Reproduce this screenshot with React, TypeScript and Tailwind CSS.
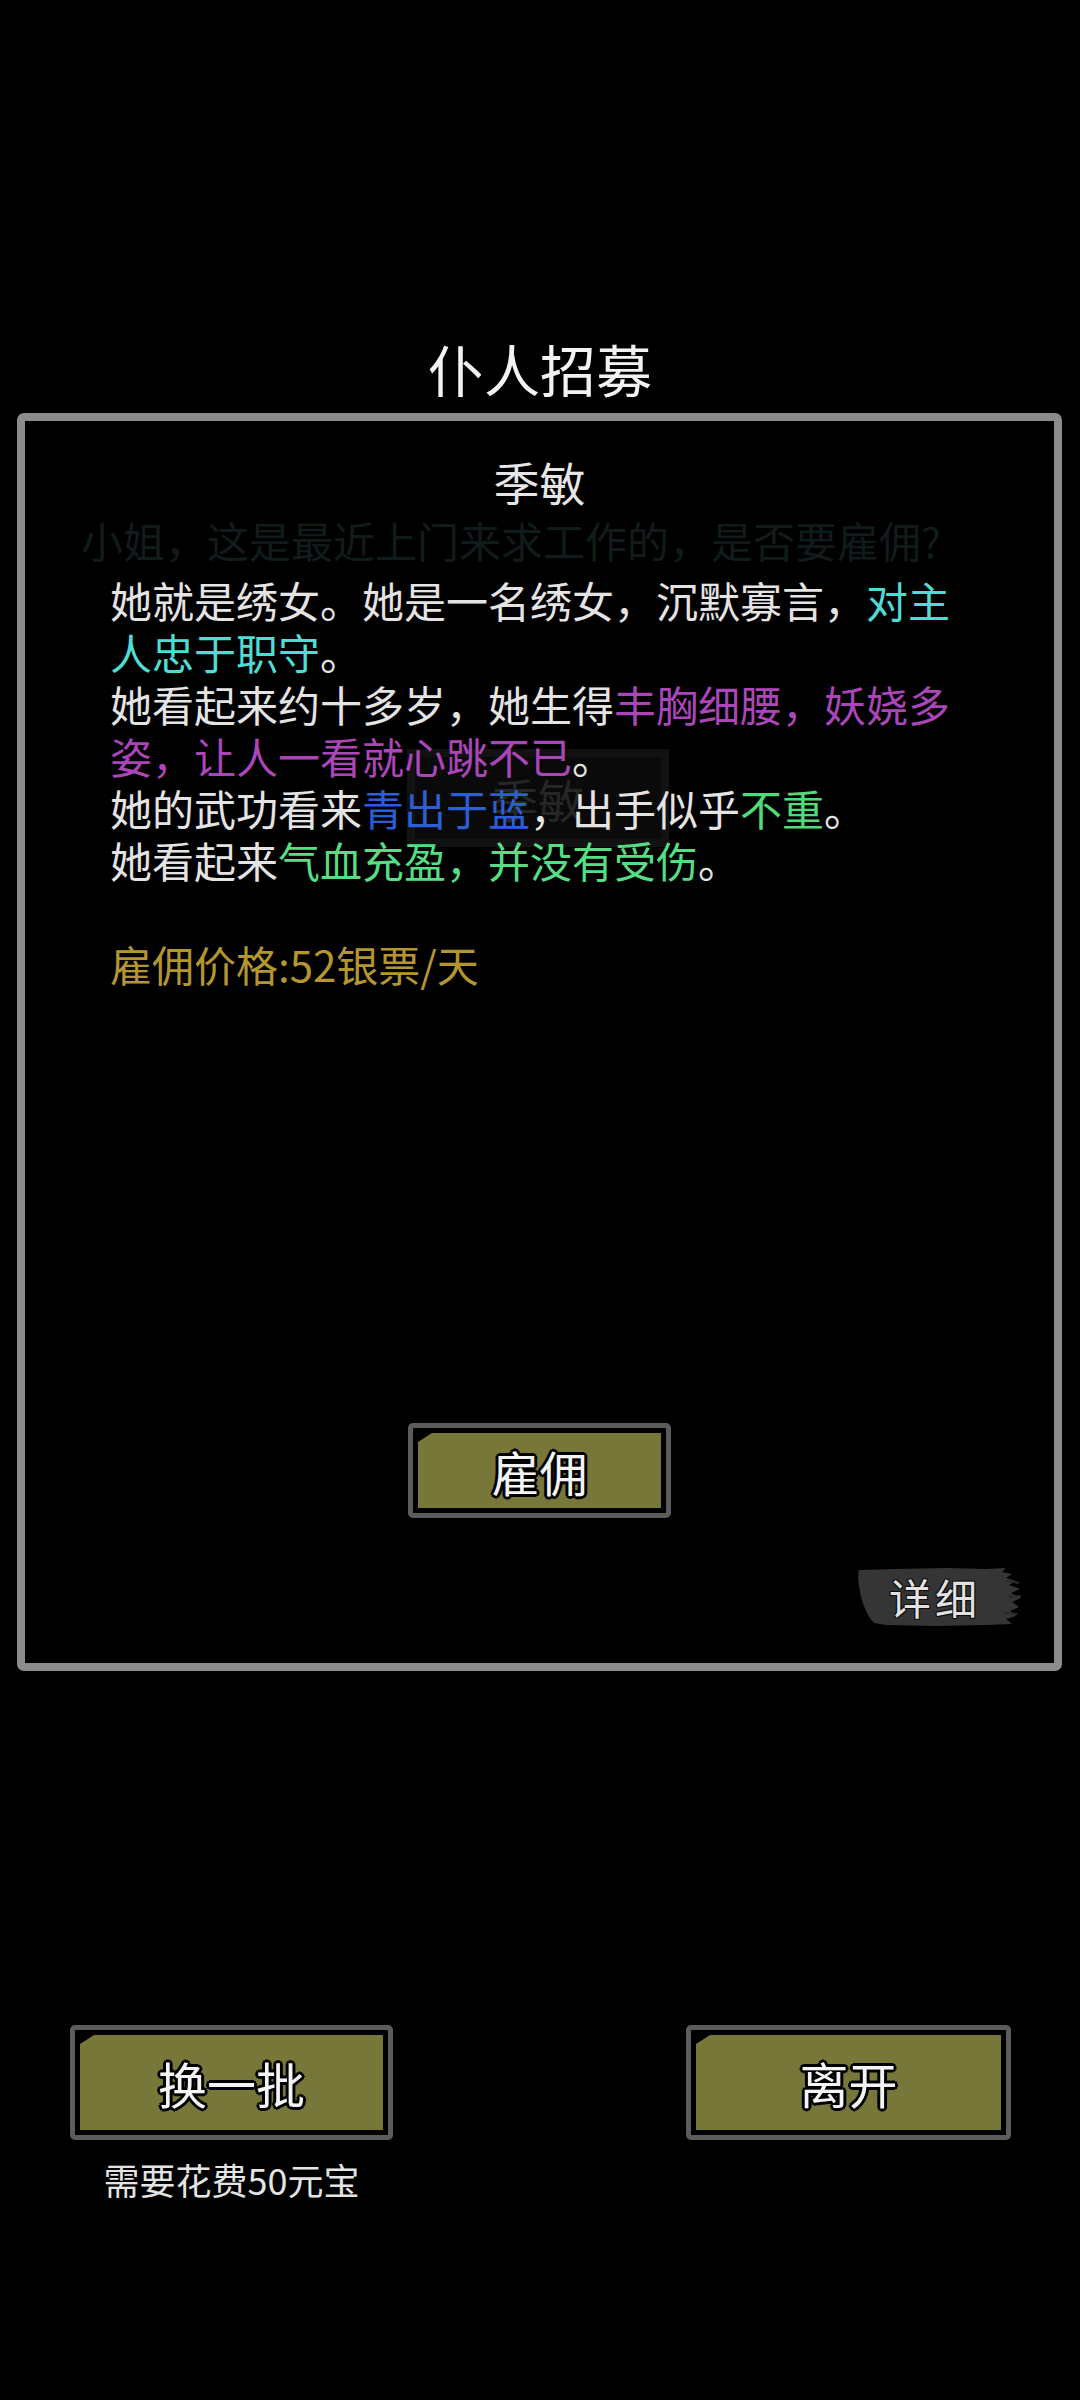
import React from "react";

const FONT = "font-['Noto_Sans_CJK_SC','Noto_Sans',sans-serif]";

function OliveButton({ label, w, h, text }: { label: string; w: string; h: string; text: string }) {
  return (
    <div className={`${w} ${h} rounded-[5px] border-[5px] border-[#5c5c5c] bg-black p-[5px]`}>
      <div className="flex h-full w-full items-center justify-center bg-[#78773a] [clip-path:polygon(14px_0,100%_0,100%_100%,0_100%,0_9px)]">
        <span
          className={`${text} leading-none text-[#f4f4f4] [text-shadow:0_0_2px_#000,2px_2px_0_#000,-2px_-2px_0_#000,2px_-2px_0_#000,-2px_2px_0_#000,0_3px_0_#000,0_-3px_0_#000,3px_0_0_#000,-3px_0_0_#000]`}
        >
          {label}
        </span>
      </div>
    </div>
  );
}

function DetailBrush() {
  return (
    <div className="relative h-[60px] w-[166px]">
      <svg className="absolute inset-0" width="166" height="60" viewBox="0 0 166 60">
        <path
          d="M3,3 L40,2 L90,1 L130,2 L150,1 L146,5 L156,7 L150,11 L160,14 L153,18 L164,22 L155,26 L165,31 L156,35 L163,40 L154,44 L160,49 L150,52 L156,57 L130,58 L80,59 L30,58 L18,56 C12,50 8,40 5,30 C3,20 1,10 3,3 Z"
          fill="#353535"
        />
        <path d="M150,14 L163,16 M152,30 L165,29 M148,46 L161,47" stroke="#2c2c2c" strokeWidth="2" />
      </svg>
      <div className="absolute inset-0 flex items-center justify-center pr-[8px]">
        <span className="text-[42px] leading-none tracking-[4px] text-[#e2e2e2] [text-shadow:0_0_2px_#000,1px_1px_0_#111,-1px_-1px_0_#111,1px_-1px_0_#111,-1px_1px_0_#111]">
          详细
        </span>
      </div>
    </div>
  );
}

export default function App() {
  return (
    <div className={`${FONT} h-[2400px] w-[1080px] overflow-hidden bg-black`}>
      <div className="pt-[333px]">
        <div className="h-[70px] text-center text-[56px] leading-[70px] text-[#f2f2f2]">仆人招募</div>

        <div className="ml-[17px] mt-[10px] flex h-[1258px] w-[1045px] flex-col rounded-[7px] border-[8px] border-[#8c8c8c] bg-black">
          <div className="mt-[30px] h-[60px] text-center text-[46px] leading-[60px] text-[#e6e6e6]">季敏</div>
          <div className="mt-[3px] h-[52px] whitespace-nowrap pl-[56px] text-[42px] leading-[52px] text-[#101c1c]">
            小姐，这是最近上门来求工作的，是否要雇佣?
          </div>

          <div className="relative mt-[8px] pl-[85px] text-[42px] leading-[52px] text-[#e4e4e4]">
            <div className="absolute left-[382px] top-[175px] h-[98px] w-[262px] border-[8px] border-[#121212] bg-[#0a0a0a]">
              <div className="flex h-full items-center justify-center text-[46px] text-[#262626]">季敏</div>
            </div>
            <div className="relative whitespace-nowrap">
              <div>
                她就是绣女。她是一名绣女，沉默寡言，<span className="text-[#4fdcd4]">对主</span>
              </div>
              <div>
                <span className="text-[#4fdcd4]">人忠于职守</span>。
              </div>
              <div>
                她看起来约十多岁，她生得<span className="text-[#aa46b8]">丰胸细腰，妖娆多</span>
              </div>
              <div>
                <span className="text-[#aa46b8]">姿，让人一看就心跳不已</span>。
              </div>
              <div>
                她的武功看来<span className="text-[#2c5ed6]">青出于蓝</span>，出手似乎<span className="text-[#4fdc78]">不重</span>。
              </div>
              <div>
                她看起来<span className="text-[#55de84]">气血充盈，并没有受伤</span>。
              </div>
              <div className="h-[52px]" />
              <div className="text-[#b4962e]">雇佣价格:52银票/天</div>
            </div>
          </div>

          <div className="mt-[433px] flex justify-center">
            <OliveButton label="雇佣" w="w-[263px]" h="h-[95px]" text="text-[48px]" />
          </div>

          <div className="mt-[49px] flex justify-end pr-[32px]">
            <DetailBrush />
          </div>
        </div>

        <div className="mt-[354px] flex justify-between pl-[70px] pr-[69px]">
          <div className="flex flex-col items-center">
            <OliveButton label="换一批" w="w-[323px]" h="h-[115px]" text="text-[49px]" />
            <div className="mt-[16px] text-[36px] leading-[46px] text-[#e4e4e4]">需要花费50元宝</div>
          </div>
          <OliveButton label="离开" w="w-[325px]" h="h-[115px]" text="text-[49px]" />
        </div>
      </div>
    </div>
  );
}
